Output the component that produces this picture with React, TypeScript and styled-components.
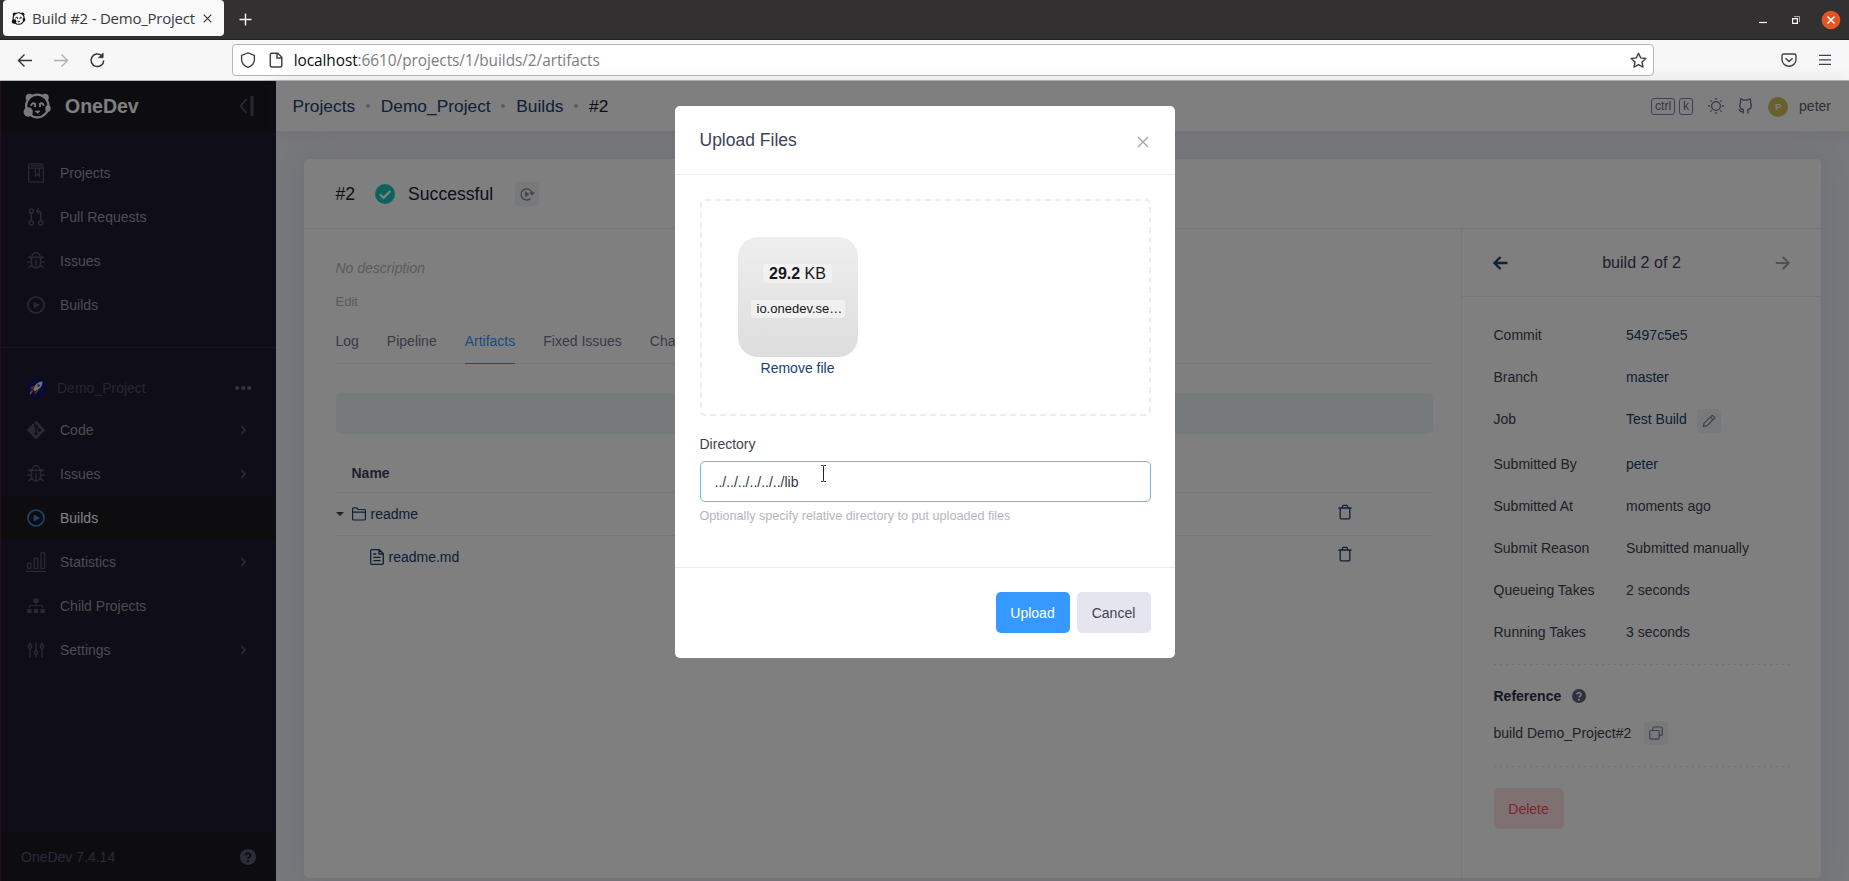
import React from "react";
import styled, { createGlobalStyle, css } from "styled-components";

const GlobalStyle = createGlobalStyle`
  *, *::before, *::after { box-sizing: border-box; }
  html, body { margin: 0; padding: 0; }
  body {
    height: 881px;
    overflow: hidden;
    font-family: "Liberation Sans", Arial, sans-serif;
    font-size: 14px;
    color: #3f424e;
  }
  button, input { font: inherit; }
`;

const link = "#21406e";
const line = "#ebecef";

/* ---------- Browser chrome ---------- */

const Window = styled.div`
  display: flex;
  flex-direction: column;
  width: 1849px;
  height: 881px;
`;

const TitleBar = styled.div`
  display: flex;
  align-items: center;
  height: 40px;
  padding: 0 8px 0 3px;
  background: #323031;
  border-bottom: 1px solid #232122;
`;

const Tab = styled.div`
  display: flex;
  align-items: center;
  align-self: flex-start;
  width: 221px;
  height: 36px;
  padding: 0 12px 0 8px;
  background: #f9f9fa;
  border-radius: 4px;
  color: #3a393c;
`;

const TabTitle = styled.span`
  flex: 1;
  margin-left: 6px;
  font-family: "Open Sans", sans-serif;
  font-size: 15px;
  letter-spacing: -0.23px;
  white-space: nowrap;
`;

const NewTab = styled.div`
  display: flex;
  margin-left: 15px;
`;

const WindowButtons = styled.div`
  display: flex;
  align-items: center;
  gap: 20px;
  margin-left: auto;
  height: 36px;
`;

const UrlToolbar = styled.div`
  display: flex;
  align-items: center;
  height: 41px;
  padding: 0 16px 0 13px;
  background: #f7f7f7;
  border-bottom: 1px solid #b5b5b5;
`;

const NavIcons = styled.div`
  display: flex;
  align-items: center;
  gap: 17px;
  width: 219px;
`;

const UrlBox = styled.div`
  display: flex;
  align-items: center;
  width: 1422px;
  height: 32px;
  padding: 0 6px 0 7px;
  background: #fff;
  border: 1px solid #b6b6b8;
  border-radius: 4px;
`;

const UrlText = styled.span`
  flex: 1;
  margin-left: 10px;
  font-family: "Open Sans", sans-serif;
  font-size: 15.4px;
  letter-spacing: -0.06px;
  color: #7c7c80;
  b { font-weight: 400; color: #0c0c0d; }
`;

const ToolbarEnd = styled.div`
  display: flex;
  align-items: center;
  gap: 20px;
  margin-left: auto;
`;

/* ---------- Application ---------- */

const Page = styled.div`
  position: relative;
  display: flex;
  height: 800px;
  background: #eef0f8;
`;

const Sidebar = styled.aside`
  display: flex;
  flex-direction: column;
  width: 276px;
  background: #1e1b2e;
  border-left: 1px solid #4a2040;
`;

const Brand = styled.div`
  display: flex;
  align-items: center;
  height: 50px;
  padding: 0 22px;
  background: #1b1a23;
`;

const BrandName = styled.span`
  flex: 1;
  margin-left: 14px;
  font-size: 19.5px;
  font-weight: 700;
  color: #fff;
`;

const Menu = styled.nav`
  padding-top: 20px;
`;

const ProjectMenu = styled(Menu)`
  margin-top: 20px;
  padding-top: 19px;
  border-top: 1px solid #33313f;
`;

const MenuItem = styled.div<{ $active?: boolean }>`
  display: flex;
  align-items: center;
  height: 44px;
  padding: 0 28px 0 25px;
  color: #9a98a2;
  svg { color: #53526c; }
  ${(p) => p.$active && css`
    background: #1b1a20;
    color: #fff;
    svg { color: #3d86d8; }
  `}
`;

const MenuLabel = styled.span`
  flex: 1;
  margin-left: 14px;
`;

const ProjectHeading = styled.div`
  display: flex;
  align-items: center;
  height: 41px;
  padding: 0 24px;
  color: #504f60;
`;

const ProjectName = styled.span`
  flex: 1;
  margin-left: 10px;
`;

const SidebarFooter = styled.div`
  display: flex;
  align-items: center;
  justify-content: space-between;
  height: 49px;
  margin-top: auto;
  padding: 0 20px;
  background: #1b1a20;
  color: #56556d;
`;

const Main = styled.main`
  display: flex;
  flex: 1;
  flex-direction: column;
`;

const TopBar = styled.header`
  display: flex;
  align-items: center;
  height: 50px;
  padding: 0 18px 0 16.5px;
  background: #fff;
  box-shadow: 0 0 16px rgba(82, 63, 105, 0.12);
`;

const Breadcrumbs = styled.div`
  display: flex;
  align-items: center;
  flex: 1;
  font-size: 17.35px;
  color: #181c32;
  a { color: ${link}; }
`;

const Dot = styled.i`
  width: 4px;
  height: 4px;
  margin: 0 10.8px;
  border-radius: 50%;
  background: #b5b5c3;
`;

const Keys = styled.div`
  display: flex;
  gap: 4px;
`;

const Key = styled.span<{ $w: number }>`
  width: ${(p) => p.$w}px;
  height: 17px;
  border: 1px solid #7e8299;
  border-radius: 3px;
  font-size: 12px;
  line-height: 14px;
  text-align: center;
  color: #6a6e85;
`;

const TopIcon = styled.span`
  display: flex;
  margin-left: 14.5px;
  color: #6a6e85;
`;

const Avatar = styled.span`
  width: 20px;
  height: 20px;
  margin: 1px 11px 0 15px;
  border-radius: 50%;
  background: #cfc05a;
  color: #fff;
  font-size: 9.5px;
  font-weight: 700;
  line-height: 20px;
  text-align: center;
`;

const UserName = styled.span`
  color: #5b5e75;
`;

const Card = styled.section`
  width: 1517px;
  height: 719px;
  margin: 28px 28px 0;
  background: #fff;
  border-radius: 5px;
  box-shadow: 0 0 30px rgba(82, 63, 105, 0.1);
`;

const CardHeader = styled.div`
  display: flex;
  align-items: center;
  height: 70px;
  padding: 1px 31.5px 0;
  border-bottom: 1px solid ${line};
  font-size: 17.6px;
  color: #181c32;
  svg { flex: none; }
`;

const Status = styled.span`
  display: flex;
  align-items: center;
  gap: 13px;
  margin: 0 22px 0 20px;
`;

const IconButton = styled.span`
  display: inline-flex;
  align-items: center;
  justify-content: center;
  width: 24px;
  height: 24px;
  border-radius: 4px;
  background: #eff2f6;
  color: #7e8299;
`;

const CardBody = styled.div`
  display: flex;
  height: 649px;
`;

const Content = styled.div`
  width: 1158px;
  padding: 24px 28px 0 31.5px;
  border-right: 1px solid ${line};
`;

const NoDescription = styled.div`
  line-height: 31px;
  font-style: italic;
  color: #b5b5c3;
`;

const EditLink = styled.div`
  margin-top: 6px;
  font-size: 13px;
  line-height: 24px;
  color: #b5b5c3;
`;

const Tabs = styled.div`
  display: flex;
  gap: 28px;
  height: 47px;
  margin-top: 3px;
  border-bottom: 1px solid ${line};
  line-height: 48px;
  color: #73768c;
`;

const TabLink = styled.span<{ $active?: boolean }>`
  height: 47px;
  white-space: nowrap;
  ${(p) => p.$active && css`
    color: #3699ff;
    border-bottom: 1px solid #3699ff;
  `}
`;

const Notice = styled.div`
  height: 41px;
  margin-top: 29px;
  border-radius: 5px;
  background: #ecf4f6;
`;

const Row = styled.div<{ $indent: number; $last?: boolean }>`
  display: flex;
  align-items: center;
  height: ${(p) => (p.$last ? 41 : 43)}px;
  padding: 0 81px 0 ${(p) => p.$indent}px;
  border-bottom: ${(p) => (p.$last ? "0" : `1px solid ${line}`)};
  color: ${link};
`;

const HeadRow = styled(Row)`
  height: 40px;
  margin-top: 19px;
  color: #3f4254;
  font-weight: 700;
`;

const Caret = styled.span`
  width: 8px;
  margin-right: 8px;
  border: 4px solid transparent;
  border-top-color: #3f4254;
  border-bottom: 0;
`;

const FileName = styled.span`
  flex: 1;
  margin-left: 5px;
`;

const TrashSlot = styled.span`
  display: flex;
  margin-bottom: 5px;
`;

const Side = styled.aside`
  flex: 1;
`;

const Pager = styled.div`
  display: flex;
  align-items: center;
  justify-content: space-between;
  height: 68px;
  padding: 0 31px;
  border-bottom: 1px solid ${line};
  font-size: 16.1px;
  color: #3f4254;
`;

const SideBody = styled.div`
  padding: 17px 31px 0 31.5px;
`;

const Meta = styled.div<{ $h?: number }>`
  display: grid;
  grid-template-columns: 132.5px 1fr;
  height: ${(p) => p.$h ?? 42}px;
  line-height: 42px;
`;

const Value = styled.span<{ $link?: boolean }>`
  display: flex;
  align-items: flex-start;
  color: ${(p) => (p.$link ? link : "inherit")};
  ${IconButton} { margin: 11px 0 0 10px; }
`;

const Dashes = styled.div`
  height: 1px;
  background: repeating-linear-gradient(90deg, #dcdde6 0 2px, transparent 2px 6px);
`;

const Reference = styled.div`
  display: flex;
  align-items: center;
  gap: 11px;
  height: 20px;
  margin-top: 21px;
  font-weight: 700;
  color: #2c2f42;
`;

const ReferenceValue = styled.div`
  display: flex;
  align-items: center;
  gap: 13px;
  height: 24px;
  margin: 15px 0 21px;
`;

const Button = styled.button<{ $kind: "primary" | "secondary" | "danger"; $w: number }>`
  width: ${(p) => p.$w}px;
  height: 41px;
  padding: 1px 0 0;
  border: 0;
  border-radius: 5px;
  line-height: 40px;
  ${(p) => p.$kind === "primary" && "background: #3699ff; color: #fff;"}
  ${(p) => p.$kind === "secondary" && "background: #e5e5ef; color: #3f4254;"}
  ${(p) => p.$kind === "danger" && "margin-top: 21px; background: #ffe2e5; color: #f64e60;"}
`;

/* ---------- Modal ---------- */

const Backdrop = styled.div`
  position: absolute;
  inset: 0;
  display: flex;
  align-items: flex-start;
  justify-content: center;
  padding-top: 25px;
  background: rgba(0, 0, 0, 0.5);
`;

const Dialog = styled.div`
  width: 500px;
  height: 552px;
  background: #fff;
  border-radius: 5px;
`;

const DialogHeader = styled.div`
  display: flex;
  align-items: center;
  justify-content: space-between;
  height: 69px;
  padding: 0 26px 0 25px;
  border-bottom: 1px solid ${line};
  font-size: 17.5px;
  color: #3f4254;
  svg { margin-top: 3px; }
`;

const DialogBody = styled.div`
  height: 392px;
  padding: 24px 24px 0 25px;
`;

const DropZone = styled.div`
  height: 217px;
  padding: 36px;
  border: 2px dashed #ebedf0;
  border-radius: 5px;
`;

const Upload = styled.div`
  display: flex;
  flex-direction: column;
  align-items: center;
  width: 120px;
  line-height: 22px;
  color: ${link};
`;

const Thumb = styled.div`
  display: flex;
  flex-direction: column;
  align-items: center;
  width: 120px;
  height: 120px;
  padding-top: 27px;
  border-radius: 20px;
  background: linear-gradient(#eee, #ddd);
  color: #17171a;
`;

const SizeTag = styled.span`
  padding: 0 6px;
  border-radius: 3px;
  background: rgba(255, 255, 255, 0.4);
  font-size: 16px;
  line-height: 19px;
`;

const NameTag = styled.span`
  width: 94px;
  margin-top: 17px;
  padding-left: 6px;
  border-radius: 3px;
  background: rgba(255, 255, 255, 0.45);
  font-size: 13px;
  line-height: 18px;
  white-space: nowrap;
`;

const Label = styled.label`
  display: block;
  margin-top: 17px;
  line-height: 22px;
`;

const Input = styled.input`
  display: block;
  width: 451px;
  height: 41px;
  margin-top: 6px;
  padding: 0 14px;
  border: 1px solid #74b4ee;
  border-radius: 5px;
  outline: 0;
  color: #33363f;
`;

const Help = styled.div`
  margin-top: 4px;
  font-size: 12.6px;
  line-height: 20px;
  color: #b6b6be;
`;

const DialogFooter = styled.div`
  display: flex;
  justify-content: flex-end;
  gap: 7px;
  padding: 24px 24px 0;
  border-top: 1px solid ${line};
`;

const Pointer = styled.svg`
  position: absolute;
  left: 819px;
  top: 384px;
`;

/* ---------- Icons ---------- */

type IconProps = { w?: number; h?: number; box?: string; sw?: number; children: React.ReactNode };

const Icon = ({ w = 20, h, box = "0 0 20 20", sw = 1.5, children }: IconProps) => (
  <svg width={w} height={h ?? w} viewBox={box} fill="none" stroke="currentColor" strokeWidth={sw}>
    {children}
  </svg>
);

const Panda = ({ w, h, color, paper }: { w: number; h: number; color: string; paper: string }) => (
  <svg width={w} height={h} viewBox="0 0 28 26">
    <circle cx="6.5" cy="4.600" r="3.8" fill={color} />
    <circle cx="22" cy="4.600" r="3.8" fill={color} />
    <ellipse cx="14.3" cy="13" rx="11.2" ry="11.4" fill={paper} stroke={color} strokeWidth="2.2" />
    <circle cx="5.2" cy="19" r="4.7" fill={color} />
    <ellipse cx="25" cy="15.5" rx="2.7" ry="3.3" fill={color} />
    <path d="M8 12.800Q9.500 8.800 12 11v3M20.800 12.800Q19.500 8.800 17 11v3" fill="none" stroke={color} strokeWidth="1.900" />
    <path d="M12 18h5l-2.5 2.4z" fill={color} stroke={color} strokeWidth=".6" />
  </svg>
);

const BugIcon = () => (
  <Icon w={20} sw={1.5}>
    <path d="M6 5.8a4 4 0 0 1 8 0M3.4 6.2h13.2M5.5 6.5v5.2a4.5 5.3 0 0 0 9 0V6.5M10 9v8M5.5 11H1.2M14.500 11h4.300M5.500 8L2 5.500M14.500 8L18 5.500M6 14l-3.500 3M14 14l3.500 3" />
  </Icon>
);

const PlayIcon = () => (
  <Icon w={20} sw={1.7}>
    <circle cx="10" cy="10" r="8" />
    <path d="M8 7l5.400 3L8 13z" fill="currentColor" stroke="currentColor" strokeWidth=".7" />
  </Icon>
);

const ChevronIcon = () => (
  <Icon w={10} box="0 0 10 10" sw={1.700}>
    <path d="M3.300 1.200L7.100 5 3.300 8.800" />
  </Icon>
);

const QuestionIcon = ({ size, bg, fg }: { size: number; bg: string; fg: string }) => (
  <svg width={size} height={size} viewBox="0 0 16 16">
    <circle cx="8" cy="8" r="8" fill={bg} />
    <path d="M5.600 6.200a2.400 2.200 0 1 1 3.600 2Q8 8.800 8 9.800" fill="none" stroke={fg} strokeWidth="1.800" />
    <circle cx="8" cy="12.200" r="1.150" fill={fg} />
  </svg>
);

const TrashIcon = () => (
  <Icon w={14} h={16} box="0 0 14 16" sw={1.3}>
    <path d="M.5 4h13M4.500 4V2.300Q4.500 1.400 5.400 1.400h3.200q.9 0 .9.900V4M2.200 4v9.800q0 1 1 1h7.600q1 0 1-1V4" />
  </Icon>
);

const icons = {
  projects: (
    <Icon sw={1.3}>
      <path d="M17.500 .8H4.500Q2.700.8 2.700 2.800V17.500q0 1.700 1.700 1.700H17.400V5.200H4.500Q2.700 5.200 2.700 3M5 2.900h12.500M9.500 5.500v7.500l2-2 2 2V5.500" />
    </Icon>
  ),
  pulls: (
    <Icon sw={1.5}>
      <circle cx="5.300" cy="4" r="2.100" />
      <circle cx="5.300" cy="15.800" r="2.100" />
      <circle cx="14.700" cy="15.800" r="2.100" />
      <path d="M5.300 6v7.500M14.700 13.500V6.500Q14.700 4 12 4h-1M12.800 1.500L10.300 4l2.500 2.500" />
    </Icon>
  ),
  bug: <BugIcon />,
  play: <PlayIcon />,
  code: (
    <svg width="20" height="20" viewBox="0 0 20 20">
      <rect x="3.400" y="3.400" width="13.200" height="13.200" rx="1" transform="rotate(45 10 10)" fill="currentColor" />
      <g fill="#1e1b2e" stroke="#1e1b2e">
        <path d="M7.500 3l2.500 3v8M10 6.500l3.500 3.500" fill="none" strokeWidth="1.200" />
        <circle cx="10" cy="6.500" r="1.100" />
        <circle cx="10" cy="14" r="1.100" />
        <circle cx="13.500" cy="10.300" r="1.100" />
      </g>
    </svg>
  ),
  stats: (
    <Icon sw={1.300}>
      <path d="M0 19.300h20M1.600 11.500h3.300v4.800H1.600zM8.200 6.500h3.500v9.800H8.200zM15 .9h3.700v15.400H15z" />
    </Icon>
  ),
  children: (
    <Icon sw={1}>
      <path d="M8 3h4v3.500H8zM1.700 13.300h3.400v3.200H1.700zM8.300 13.300h3.400v3.200H8.300zM14.900 13.300h3.400v3.200h-3.400z" fill="currentColor" />
      <path d="M10 7v2.500M3.400 12V9.700h13.200V12" />
    </Icon>
  ),
  settings: (
    <Icon sw={1.500}>
      <path d="M4 2.500v2M4 8.500v9M10 2.500v8M10 14.500v3M16 2.500v2M16 8.500v9" />
      <circle cx="4" cy="6.500" r="1.700" />
      <circle cx="10" cy="12.500" r="1.700" />
      <circle cx="16" cy="6.500" r="1.700" />
    </Icon>
  ),
};

type MenuEntry = { icon: keyof typeof icons; label: string; more?: boolean; active?: boolean };

const mainMenu: MenuEntry[] = [
  { icon: "projects", label: "Projects" },
  { icon: "pulls", label: "Pull Requests" },
  { icon: "bug", label: "Issues" },
  { icon: "play", label: "Builds" },
];

const projectMenu: MenuEntry[] = [
  { icon: "code", label: "Code", more: true },
  { icon: "bug", label: "Issues", more: true },
  { icon: "play", label: "Builds", active: true },
  { icon: "stats", label: "Statistics", more: true },
  { icon: "children", label: "Child Projects" },
  { icon: "settings", label: "Settings", more: true },
];

const MenuEntries = ({ entries }: { entries: MenuEntry[] }) => (
  <>
    {entries.map((e) => (
      <MenuItem key={e.label} $active={e.active}>
        {icons[e.icon]}
        <MenuLabel>{e.label}</MenuLabel>
        {e.more && <ChevronIcon />}
      </MenuItem>
    ))}
  </>
);

const Browser = () => (
  <>
    <TitleBar>
      <Tab>
        <Panda w={15} h={13} color="#111" paper="#f9f9fa" />
        <TabTitle>Build #2 - Demo_Project</TabTitle>
        <Icon w={9} box="0 0 9 9" sw={1.2}><path d="M.7.7l7.600 7.600M8.300.7L.7 8.300" /></Icon>
      </Tab>
      <NewTab>
        <svg width="13" height="13" viewBox="0 0 13 13" stroke="#f5f5f5" strokeWidth="1.400"><path d="M6.500.5v12M.5 6.500h12" /></svg>
      </NewTab>
      <WindowButtons>
        <svg width="14" height="12" viewBox="0 0 14 12" stroke="#fff" strokeWidth="1.200"><path d="M2 8.500h8" /></svg>
        <svg width="10" height="10" viewBox="0 0 10 10" fill="none" stroke="#fff"><path d="M1.600 3.600h4.800v4.800H1.600z" strokeWidth="1.200" /><path d="M3 1.500h5.500V7" stroke="#aaa" /></svg>
        <svg width="20" height="20" viewBox="0 0 20 20"><circle cx="10" cy="10" r="9.300" fill="#e35525" /><path d="M6.500 6.500l7 7M13.500 6.500l-7 7" stroke="#fff" strokeWidth="1.500" /></svg>
      </WindowButtons>
    </TitleBar>
    <UrlToolbar>
      <NavIcons>
        <svg width="20" height="20" viewBox="0 0 20 20" fill="none" stroke="#333" strokeWidth="1.400"><path d="M19 10.500H5.500M11.500 4.500l-6 6 6 6" /></svg>
        <svg width="20" height="20" viewBox="0 0 20 20" fill="none" stroke="#b0b0b0" strokeWidth="1.400"><path d="M4 10.500h13.500M11.500 4.500l6 6-6 6" /></svg>
        <svg width="20" height="20" viewBox="0 0 20 20" fill="none" stroke="#333" strokeWidth="1.500"><path d="M14.500 5.500a6.300 6.300 0 1 0 2.200 5" /><path d="M16.200 3v4.800h-4.800z" fill="#333" strokeWidth=".6" /></svg>
      </NavIcons>
      <UrlBox>
        <Icon w={16} box="0 0 16 16" sw={1.400}><path d="M8 .9l6.400 2.500v4c0 4-2.800 6.500-6.400 8C4.400 13.900 1.600 11.400 1.600 7.400v-4z" /></Icon>
        <span>&nbsp;&nbsp;&nbsp;</span>
        <Icon w={16} box="0 0 16 16" sw={1.500}><path d="M3.800 1.200h6l4 4v8.300q0 1.500-1.500 1.500H3.800q-1.500 0-1.500-1.500V2.700q0-1.500 1.500-1.500zM9 1.500V6h4.600" /></Icon>
        <UrlText><b>localhost</b>:6610/projects/1/builds/2/artifacts</UrlText>
        <Icon w={17} box="0 0 17 17" sw={1.400}><path d="M8.500 1.200l2.200 4.700 5.100.6-3.800 3.500 1 5.100-4.500-2.500L4 15.100 5 10 1.200 6.500l5.100-.6z" strokeLinejoin="round" /></Icon>
      </UrlBox>
      <ToolbarEnd>
        <Icon w={16} box="0 0 16 16" sw={1.400}><path d="M2.700 2h10.600q1.700 0 1.700 1.700V7.500a7 6.800 0 0 1-14 0V3.700Q1 2 2.700 2zM4.500 6.200L8 9.500l3.500-3.300" /></Icon>
        <Icon w={16} box="0 0 16 16" sw={1.300}><path d="M2 3.400h12M2 7.900h12M2 12.400h12" /></Icon>
      </ToolbarEnd>
    </UrlToolbar>
  </>
);

const rows: { label: string; value: string; link?: boolean; edit?: boolean }[] = [
  { label: "Commit", value: "5497c5e5", link: true },
  { label: "Branch", value: "master", link: true },
  { label: "Job", value: "Test Build", link: true, edit: true },
  { label: "Submitted By", value: "peter", link: true },
  { label: "Submitted At", value: "moments ago" },
  { label: "Submit Reason", value: "Submitted manually" },
  { label: "Queueing Takes", value: "2 seconds" },
  { label: "Running Takes", value: "3 seconds" },
];

const UploadDialog = () => (
  <Backdrop>
    <Dialog>
      <DialogHeader>
        Upload Files
        <svg width="12" height="12" viewBox="0 0 12 12" stroke="#a3a4b0" strokeWidth="1.400"><path d="M1 1l10 10M11 1L1 11" /></svg>
      </DialogHeader>
      <DialogBody>
        <DropZone>
          <Upload>
            <Thumb>
              <SizeTag><b>29.2</b> KB</SizeTag>
              <NameTag>io.onedev.se…</NameTag>
            </Thumb>
            Remove file
          </Upload>
        </DropZone>
        <Label>Directory</Label>
        <Input defaultValue="../../../../../../lib" />
        <Help>Optionally specify relative directory to put uploaded files</Help>
      </DialogBody>
      <DialogFooter>
        <Button $kind="primary" $w={74}>Upload</Button>
        <Button $kind="secondary" $w={74}>Cancel</Button>
      </DialogFooter>
    </Dialog>
    <Pointer width="9" height="17" viewBox="0 0 9 17" fill="none" stroke="#222" strokeWidth="1">
      <path d="M2 .5h1.500q1 0 1 1q0-1 1-1H7M4.500 1.500v14M2 16.500h1.500q1 0 1-1q0 1 1 1H7" />
    </Pointer>
  </Backdrop>
);

export default function App() {
  return (
    <Window>
      <GlobalStyle />
      <Browser />
      <Page>
        <Sidebar>
          <Brand>
            <Panda w={28} h={26} color="#f4f4f4" paper="#1b1a23" />
            <BrandName>OneDev</BrandName>
            <svg width="15" height="22" viewBox="0 0 15 22" fill="none" stroke="#504f68"><path d="M7.500 4L1.500 11l6 7" strokeWidth="1.800" /><path d="M13 1v20" strokeWidth="3" /></svg>
          </Brand>
          <Menu><MenuEntries entries={mainMenu} /></Menu>
          <ProjectMenu>
            <ProjectHeading>
              <svg width="22" height="22" viewBox="0 0 22 22">
                <circle cx="11" cy="11" r="10" fill="#10146e" />
                <path d="M17.500 4.500c-5 0-8 4-9.500 8l2 2c4-1.800 7.500-5 7.500-10z" fill="#e4e4ea" />
                <path d="M10 8.500L6 10l-1 2.500 3.500-.5M13.500 12.500L12 16l-2.500 1.500.5-3.500" fill="#b8463c" />
                <circle cx="13.500" cy="8.500" r="1.300" fill="#3a4a70" />
                <path d="M7.500 13.500L5 17" stroke="#c9a06a" strokeWidth="1.500" />
              </svg>
              <ProjectName>Demo_Project</ProjectName>
              <svg width="17" height="6" viewBox="0 0 17 6" fill="#6a697c"><circle cx="2.200" cy="3" r="2.100" /><circle cx="8.200" cy="3" r="2.100" /><circle cx="14.200" cy="3" r="2.100" /></svg>
            </ProjectHeading>
            <MenuEntries entries={projectMenu} />
          </ProjectMenu>
          <SidebarFooter>
            OneDev 7.4.14
            <QuestionIcon size={16} bg="#5b5a74" fg="#1b1a20" />
          </SidebarFooter>
        </Sidebar>
        <Main>
          <TopBar>
            <Breadcrumbs>
              <a>Projects</a><Dot /><a>Demo_Project</a><Dot /><a>Builds</a><Dot />#2
            </Breadcrumbs>
            <Keys>
              <Key $w={24}>ctrl</Key>
              <Key $w={14}>k</Key>
            </Keys>
            <TopIcon>
              <Icon w={16} box="0 0 16 16" sw={1.300}><circle cx="8" cy="8" r="4.400" /><path d="M8 0v1.800M8 14.200V16M0 8h1.800M14.200 8H16M2.400 2.400l1.200 1.200M12.400 12.400l1.200 1.200M13.600 2.400l-1.200 1.200M3.600 12.400l-1.200 1.200" /></Icon>
            </TopIcon>
            <TopIcon>
              <Icon w={15} h={16} box="0 0 15 16" sw={1.300}><path d="M5.200 15.500v-4Q1.800 11 1.800 7.200 1.800 5.500 2.700 4.300 2.200 2.500 2.700 1q1.600.1 2.900 1.200 2-.5 3.900 0Q10.800 1.100 12.400 1q.5 1.500 0 3.300.9 1.200.9 2.900Q13.300 11 9.900 11.500v4M5.200 13.600Q3 14.200 2 12.500 1.400 11.500.5 11.300" /></Icon>
            </TopIcon>
            <Avatar>P</Avatar>
            <UserName>peter</UserName>
          </TopBar>
          <Card>
            <CardHeader>
              #2
              <Status>
                <svg width="20" height="20" viewBox="0 0 20 20"><circle cx="10" cy="10" r="10" fill="#1bc5bd" /><path d="M5 10.300l3.600 3.500L15.300 7" fill="none" stroke="#fff" strokeWidth="2.300" /></svg>
                Successful
              </Status>
              <IconButton>
                <Icon w={16} box="0 0 16 16" sw={1.300}><path d="M11.500 12.500A5.600 5.600 0 1 1 13.200 7.500" /><path d="M10.800 6.500h4.700L13.200 9.600zM6.300 5.500l4 2.700-4 2.700z" fill="currentColor" strokeWidth=".3" /></Icon>
              </IconButton>
            </CardHeader>
            <CardBody>
              <Content>
                <NoDescription>No description</NoDescription>
                <EditLink>Edit</EditLink>
                <Tabs>
                  <TabLink>Log</TabLink>
                  <TabLink>Pipeline</TabLink>
                  <TabLink $active>Artifacts</TabLink>
                  <TabLink>Fixed Issues</TabLink>
                  <TabLink>Changes</TabLink>
                </Tabs>
                <Notice />
                <HeadRow $indent={16}>Name</HeadRow>
                <Row $indent={0}>
                  <Caret />
                  <Icon w={14} box="0 0 14 14" sw={1.200}><path d="M.6 12V1.800Q.6.8 1.600.8h3l1.500 1.700h6.300q1 0 1 1V12q0 1-1 1H1.600q-1 0-1-1zM.6 5.200h12.800" /></Icon>
                  <FileName>readme</FileName>
                  <TrashSlot><TrashIcon /></TrashSlot>
                </Row>
                <Row $indent={34} $last>
                  <Icon w={14} h={16} box="0 0 14 16" sw={1.300}><path d="M1.700.7h7.600l4 4v9.600q0 1-1 1H1.700q-1 0-1-1V1.700q0-1 1-1zM9 .7V5h4.300M3.300 5h3M3.300 8.300h7.400M3.300 11.600h7.400" /></Icon>
                  <FileName>readme.md</FileName>
                  <TrashSlot><TrashIcon /></TrashSlot>
                </Row>
              </Content>
              <Side>
                <Pager>
                  <svg width="15" height="14" viewBox="0 0 15 14" fill="none" stroke={link} strokeWidth="2.300"><path d="M14.500 7H2M7.500 1l-6 6 6 6" /></svg>
                  build 2 of 2
                  <svg width="15" height="14" viewBox="0 0 15 14" fill="none" stroke="#a1a2b0" strokeWidth="2.200"><path d="M.8 7h12.500M7.800 1l6 6-6 6" /></svg>
                </Pager>
                <SideBody>
                  {rows.map((r) => (
                    <Meta key={r.label} $h={r.edit ? 45 : 42}>
                      <span>{r.label}</span>
                      <Value $link={r.link}>
                        {r.value}
                        {r.edit && (
                          <IconButton>
                            <Icon w={14} box="0 0 14 14" sw={1.200}><path d="M1.500 12.500l.6-3.300L9.500 1.800q.8-.8 1.600 0l1.100 1.100q.8.8 0 1.600l-7.400 7.400zM8.300 3l2.700 2.700" /></Icon>
                          </IconButton>
                        )}
                      </Value>
                    </Meta>
                  ))}
                  <Dashes style={{ marginTop: 11 }} />
                  <Reference>
                    Reference
                    <QuestionIcon size={14} bg="#5e6278" fg="#fff" />
                  </Reference>
                  <ReferenceValue>
                    build Demo_Project#2
                    <IconButton>
                      <Icon w={14} box="0 0 14 14" sw={1.200}><path d="M2 4.500h7q1.200 0 1.200 1.200v6.200q0 1.200-1.200 1.200H2Q.8 13.100.8 11.900V5.700Q.8 4.500 2 4.500zM3.800 4.300V2.200Q3.800 1 5 1h7q1.200 0 1.200 1.200v6q0 1.200-1.200 1.200h-1.600" /></Icon>
                    </IconButton>
                  </ReferenceValue>
                  <Dashes />
                  <Button $kind="danger" $w={70}>Delete</Button>
                </SideBody>
              </Side>
            </CardBody>
          </Card>
        </Main>
        <UploadDialog />
      </Page>
    </Window>
  );
}
